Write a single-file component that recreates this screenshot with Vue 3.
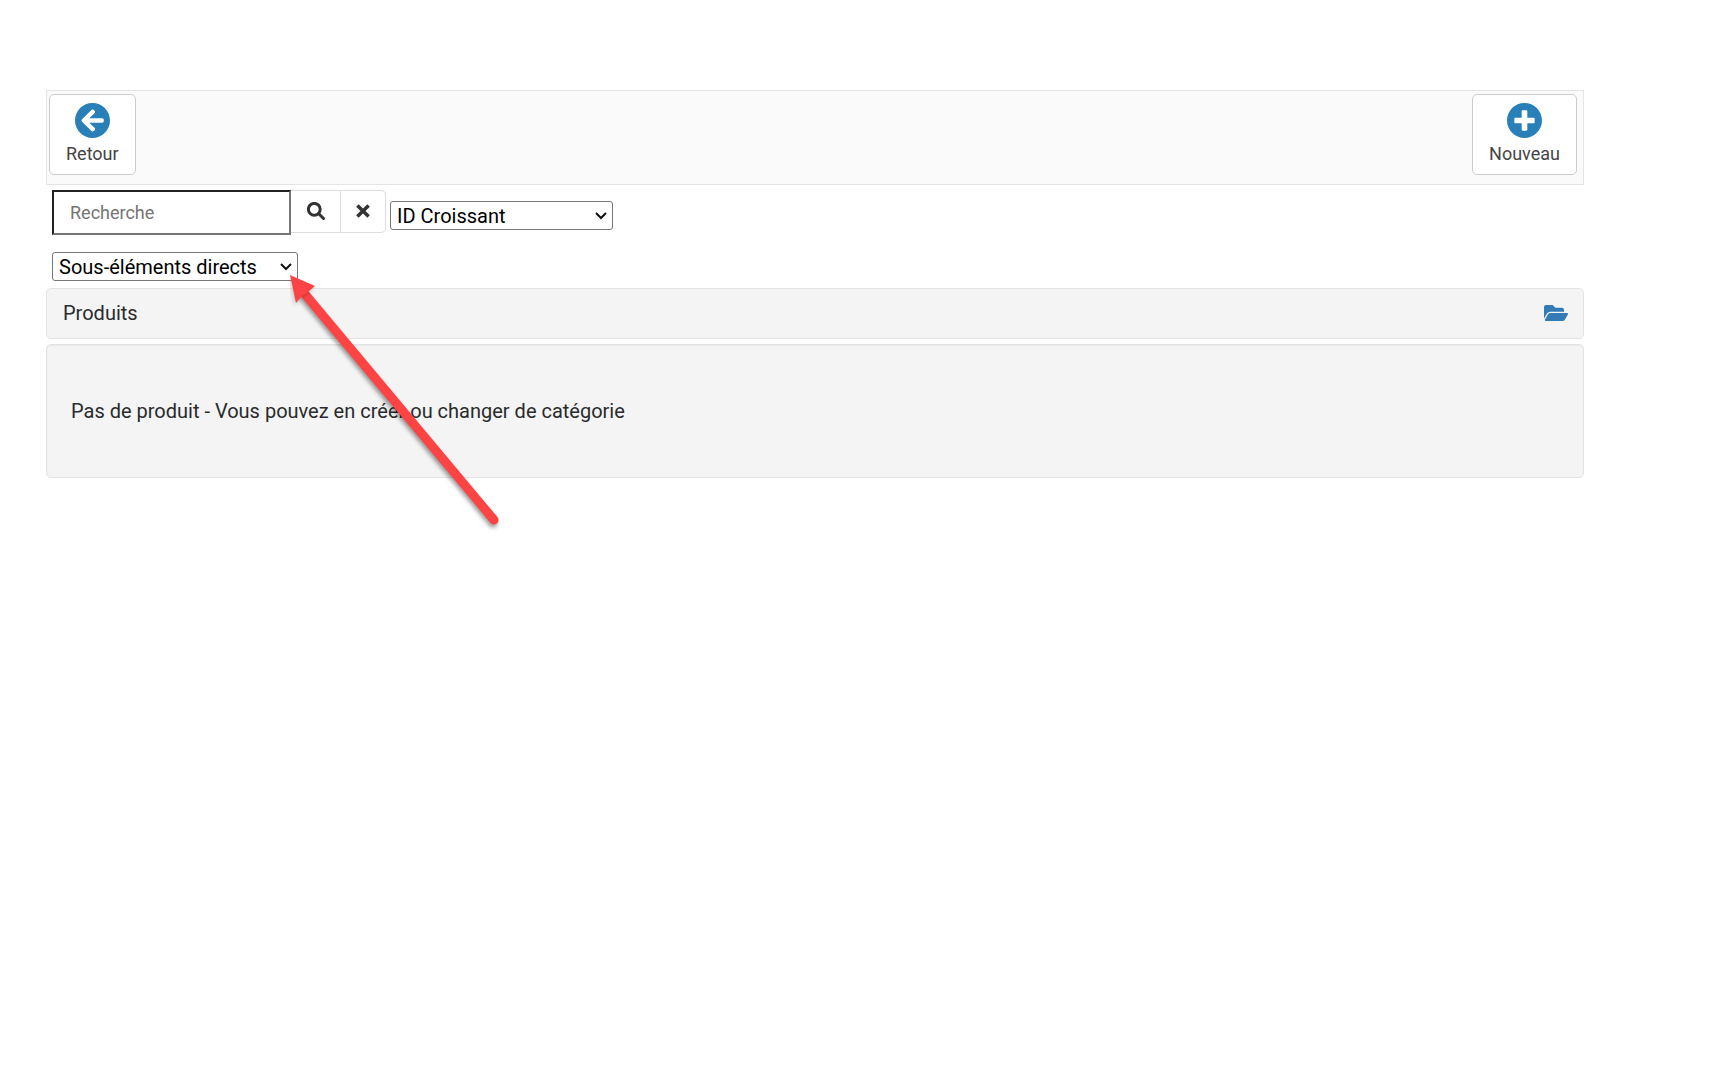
<script setup>
import { ref } from 'vue'

const search = ref('')
const sort = ref('id-asc')
const scope = ref('direct')

const sortOptions = [
    { value: 'id-asc', label: 'ID Croissant' },
    { value: 'id-desc', label: 'ID Décroissant' },
]

const scopeOptions = [
    { value: 'direct', label: 'Sous-éléments directs' },
    { value: 'all', label: 'Tous les sous-éléments' },
]

const clearSearch = () => {
    search.value = ''
}
</script>

<template>
    <main class="page">
        <header class="toolbar">
            <button type="button" class="tool-btn">
                <svg class="tool-icon" viewBox="8 8 496 496" aria-hidden="true">
                    <path d="M256 504C119 504 8 393 8 256S119 8 256 8s248 111 248 248-111 248-248 248zm28.900-143.600L209.400 288H392c13.300 0 24-10.700 24-24v-16c0-13.300-10.700-24-24-24H209.400l75.500-72.400c9.700-9.300 9.900-24.800.4-34.300l-11-10.900c-9.400-9.400-24.600-9.400-33.900 0L107.700 239c-9.400 9.400-9.400 24.600 0 33.900l132.700 132.700c9.400 9.400 24.600 9.400 33.900 0l11-10.900c9.500-9.500 9.300-25-.4-34.300z" />
                </svg>
                <span>Retour</span>
            </button>
            <button type="button" class="tool-btn">
                <svg class="tool-icon" viewBox="8 8 496 496" aria-hidden="true">
                    <path d="M256 8C119 8 8 119 8 256s111 248 248 248 248-111 248-248S393 8 256 8zm144 276c0 6.600-5.400 12-12 12h-92v92c0 6.600-5.400 12-12 12h-56c-6.600 0-12-5.400-12-12v-92h-92c-6.600 0-12-5.400-12-12v-56c0-6.600 5.400-12 12-12h92v-92c0-6.600 5.400-12 12-12h56c6.600 0 12 5.400 12 12v92h92c6.600 0 12 5.400 12 12v56z" />
                </svg>
                <span>Nouveau</span>
            </button>
        </header>

        <form class="filters" @submit.prevent>
            <div class="filter-row">
                <div class="search-group">
                    <input v-model="search" type="text" class="search-input" placeholder="Recherche" aria-label="Recherche">
                    <button type="submit" class="group-btn search-btn" aria-label="Rechercher">
                        <svg class="search-icon" viewBox="0 0 18 18" aria-hidden="true">
                            <circle cx="7.300" cy="7.300" r="5.900" />
                            <path d="M11.800 11.800L16.500 16.500" />
                        </svg>
                    </button>
                    <button type="button" class="group-btn clear-btn" aria-label="Effacer" @click="clearSearch">
                        <svg class="clear-icon" viewBox="0 0 12 12" aria-hidden="true">
                            <path d="M1.200 1.200L10.800 10.800M10.800 1.200L1.200 10.800" />
                        </svg>
                    </button>
                </div>
                <div class="select-box sort-box">
                    <select v-model="sort" aria-label="Tri">
                        <option v-for="o in sortOptions" :key="o.value" :value="o.value">{{ o.label }}</option>
                    </select>
                    <svg class="chevron" viewBox="0 0 12 8" aria-hidden="true"><path d="M1 1L6 6L11 1" /></svg>
                </div>
            </div>
            <div class="select-box scope-box">
                <select v-model="scope" aria-label="Sous-éléments">
                    <option v-for="o in scopeOptions" :key="o.value" :value="o.value">{{ o.label }}</option>
                </select>
                <svg class="chevron" viewBox="0 0 12 8" aria-hidden="true"><path d="M1 1L6 6L11 1" /></svg>
                <svg class="pointer" viewBox="0 0 230 270" aria-hidden="true">
                    <path class="pointer-line" d="M14 18L204 245" />
                    <path class="pointer-head" d="M0 0L25 11L18 17L12 21L6 28Z" />
                </svg>
            </div>
        </form>

        <section class="panel category">
            <span>Produits</span>
            <a href="#" class="folder-link" aria-label="Ouvrir la catégorie">
                <svg class="folder-icon" viewBox="0 64 576 384" aria-hidden="true">
                    <path d="M572.694 292.093L500.270 416.248A63.997 63.997 0 0 1 444.989 448H45.025c-18.523 0-30.064-20.093-20.731-36.093l72.424-124.155A64 64 0 0 1 152 256h399.964c18.523 0 30.064 20.093 20.730 36.093zM152 224h328v-48c0-26.510-21.490-48-48-48H272l-64-64H48C21.490 64 0 85.490 0 112v278.046l69.077-118.418C86.214 242.250 117.989 224 152 224z" />
                </svg>
            </a>
        </section>

        <section class="panel empty">
            Pas de produit - Vous pouvez en créer ou changer de catégorie
        </section>
    </main>
</template>

<style>
body {
    background: #fff;
}
</style>

<style scoped>
.page {
    box-sizing: border-box;
    min-height: 100vh;
    padding: 90px 141px 40px 46px;
    font-family: Roboto, sans-serif;
    font-size: 20px;
    line-height: 28px;
    color: #292b2c;
}

.page * {
    box-sizing: border-box;
}

button,
input,
select {
    font-family: inherit;
    margin: 0;
}

.toolbar {
    display: flex;
    justify-content: space-between;
    padding: 3px 6px 9px 2px;
    background: #fafafa;
    border: 1px solid #e4e4e4;
}

.tool-btn {
    display: flex;
    flex-direction: column;
    align-items: center;
    gap: 3px;
    padding: 8px 16px;
    font-size: 18px;
    line-height: 25px;
    color: #444;
    background: #fff;
    border: 1px solid #ccc;
    border-radius: 5px;
    cursor: pointer;
}

.tool-icon {
    width: 35px;
    height: 35px;
    fill: #2980b9;
}

.filters {
    padding: 5px 6px 7px;
}

.filter-row {
    display: flex;
    align-items: flex-start;
    gap: 4px;
    margin-bottom: 17px;
}

.search-group {
    display: flex;
    align-items: flex-start;
}

.search-input {
    width: 239px;
    height: 45px;
    padding: 0 16px;
    font-size: 18px;
    color: #333;
    background: #fff;
    border: 2px solid;
    border-color: #222 #767676 #767676 #222;
    border-radius: 0;
}

.search-input::placeholder {
    color: #757575;
    opacity: 1;
}

.group-btn {
    display: flex;
    align-items: center;
    justify-content: center;
    height: 43px;
    padding: 0 0 2px;
    background: #fff;
    border: 1px solid #ddd;
    border-left: 0;
    cursor: pointer;
}

.search-btn {
    width: 50px;
}

.clear-btn {
    width: 45px;
    border-radius: 0 5px 5px 0;
}

.search-icon,
.clear-icon {
    fill: none;
    stroke: #333;
}

.search-icon {
    width: 18px;
    height: 18px;
    stroke-width: 3;
    stroke-linecap: round;
}

.clear-icon {
    width: 14px;
    height: 14px;
    stroke-width: 3;
}

.select-box {
    display: grid;
    align-items: center;
    position: relative;
}

.select-box select {
    grid-area: 1 / 1;
    width: 100%;
    height: 29px;
    padding: 0 24px 0 6px;
    font-size: 20px;
    color: #000;
    background: #fff;
    border: 1px solid #767676;
    border-radius: 3px;
    appearance: none;
}

.chevron {
    grid-area: 1 / 1;
    justify-self: end;
    width: 12px;
    height: 8px;
    margin-right: 6px;
    fill: none;
    stroke: #111;
    stroke-width: 2;
    pointer-events: none;
}

.sort-box {
    width: 223px;
    margin-top: 11px;
}

.scope-box {
    width: 246px;
}

/* red annotation arrow aimed at the drop-down */
.pointer {
    position: absolute;
    top: 23px;
    left: 238px;
    z-index: 1;
    width: 230px;
    height: 270px;
    pointer-events: none;
}

.pointer-line {
    fill: none;
    stroke: #fd4444;
    stroke-width: 9;
    stroke-linecap: round;
    filter: drop-shadow(-1px 3px 2px rgba(0, 0, 0, 0.4));
}

.pointer-head {
    fill: #fd4444;
    filter: drop-shadow(-1px 2px 2px rgba(0, 0, 0, 0.2));
}

.panel {
    background: #f4f4f4;
    border: 1px solid #e3e3e3;
    border-radius: 5px;
}

.category {
    display: flex;
    align-items: center;
    justify-content: space-between;
    padding: 10px 15px 11px 16px;
    margin-bottom: 5px;
}

.folder-link {
    display: flex;
}

.folder-icon {
    width: 24px;
    height: 16px;
    fill: #337ab7;
}

.empty {
    padding: 52px 24px;
    box-shadow: inset 0 1px 1px rgba(0, 0, 0, 0.05);
}
</style>
